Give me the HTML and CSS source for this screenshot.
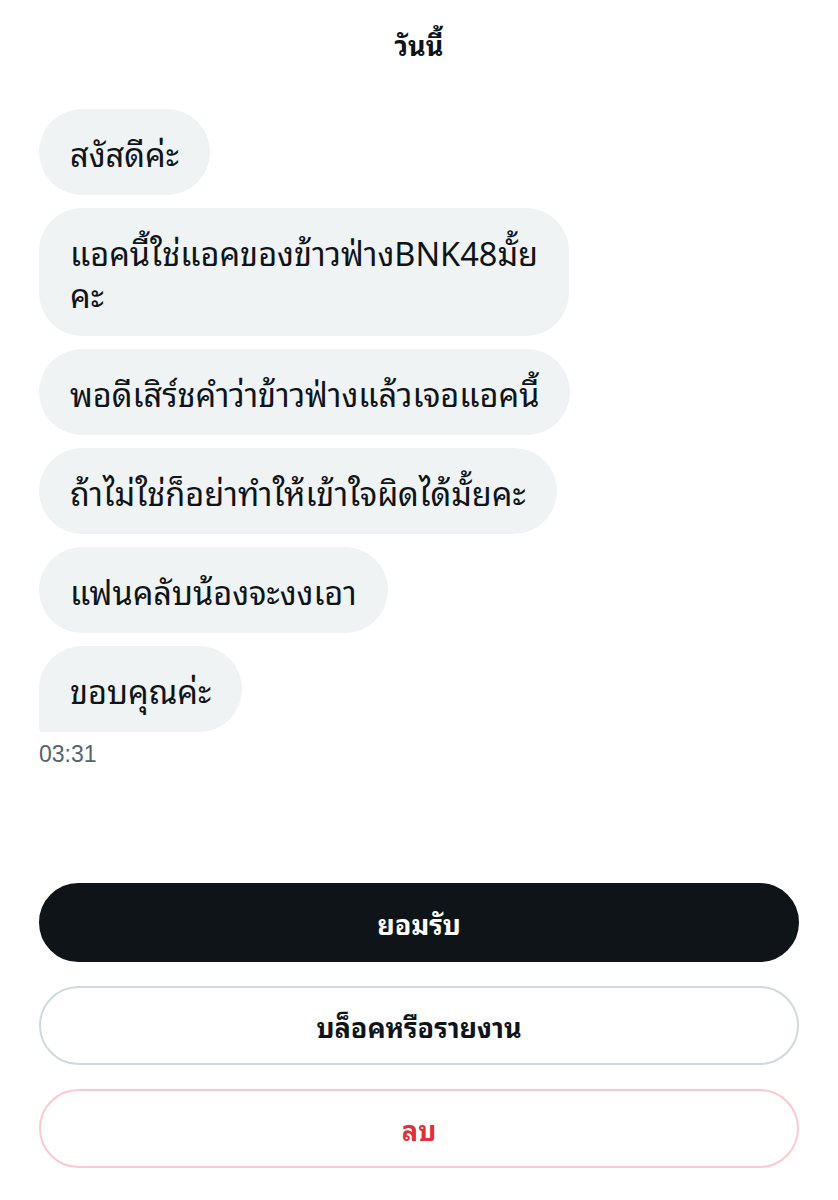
FILE: index.html
```html
<!doctype html>
<html>

	<head>
		<title>ข้อความ</title>
		<meta charset="utf-8" />
		<link rel="stylesheet" href="styles.css">
	</head>

	<body>

		<div class="day">วันนี้</div>

		<div class="thread">
			<div class="msg">สงัสดีค่ะ</div>
			<div class="msg">แอคนี้ใช่แอคของข้าวฟ่างBNK48มั้ย<br>คะ</div>
			<div class="msg">พอดีเสิร์ชคำว่าข้าวฟ่างแล้วเจอแอคนี้</div>
			<div class="msg">ถ้าไม่ใช่ก็อย่าทำให้เข้าใจผิดได้มั้ยคะ</div>
			<div class="msg">แฟนคลับน้องจะงงเอา</div>
			<div class="msg last">ขอบคุณค่ะ</div>
			<div class="time">03:31</div>
		</div>

		<div class="actions">
			<button class="btn accept">ยอมรับ</button>
			<button class="btn block">บล็อคหรือรายงาน</button>
			<button class="btn remove">ลบ</button>
		</div>

	</body>

</html>
```

FILE: styles.css
```css
body {
	margin: 0;
	padding: 0 39px;
	background: #fff;
	color: #0f1419;
	font-family: "Noto Sans Thai Looped", "Noto Looped Thai", "Noto Sans Thai", "Noto Sans", "Liberation Sans", sans-serif;
}

.day {
	text-align: center;
	font-weight: bold;
	font-size: 27px;
	line-height: 40px;
	padding-top: 24px;
}

.thread {
	display: flex;
	flex-direction: column;
	align-items: flex-start;
	gap: 13px;
	margin-top: 45px;
}

.msg {
	background: #eff3f4;
	border-radius: 43px;
	padding: 22px 31px;
	font-size: 32.5px;
	line-height: 42px;
}

.msg.last {
	border-bottom-left-radius: 4px;
}

.time {
	margin-top: -6px;
	color: #536471;
	font-family: "Liberation Sans", sans-serif;
	font-size: 23px;
	line-height: 30px;
}

.actions {
	display: flex;
	flex-direction: column;
	gap: 24px;
	margin-top: 114px;
}

.btn {
	height: 79px;
	border-radius: 40px;
	background: #fff;
	border: 2px solid #cfd9de;
	font-family: inherit;
	font-size: 27px;
	font-weight: bold;
	color: #0f1419;
}

.btn.accept {
	background: #0f1419;
	border-color: #0f1419;
	color: #fff;
}

.btn.remove {
	border-color: #fdc9ce;
	color: #e0303a;
}
```
